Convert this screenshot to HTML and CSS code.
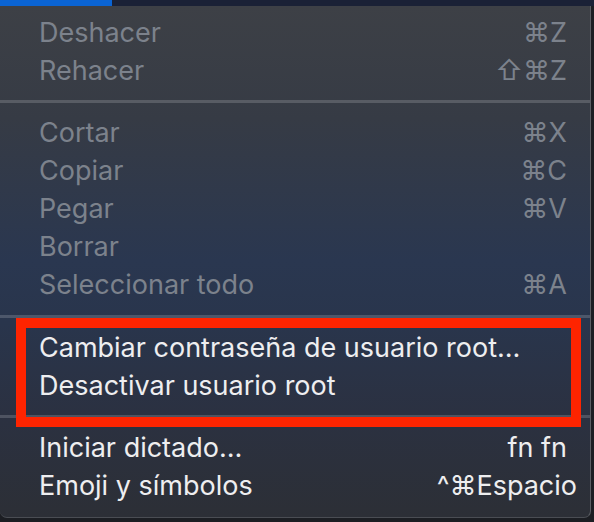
FILE: index.html
```html
<!DOCTYPE html>
<html>
  <head>
    <title>Edición</title>
    <link rel="stylesheet" href="styles.css">
  </head>

  <body>
    <!-- Menu bar strip -->
    <div class="menubar">
      <div class="menubar-active"></div>
    </div>

    <div class="screen">
      <div class="menu">
        <div class="item disabled"><span>Deshacer</span><span class="shortcut">⌘Z</span></div>
        <div class="item disabled"><span>Rehacer</span><span class="shortcut">⇧⌘Z</span></div>
        <div class="separator"></div>

        <div class="item disabled"><span>Cortar</span><span class="shortcut">⌘X</span></div>
        <div class="item disabled"><span>Copiar</span><span class="shortcut">⌘C</span></div>
        <div class="item disabled"><span>Pegar</span><span class="shortcut">⌘V</span></div>
        <div class="item disabled"><span>Borrar</span></div>
        <div class="item disabled"><span>Seleccionar todo</span><span class="shortcut">⌘A</span></div>
        <div class="separator"></div>

        <div class="item"><span>Cambiar contraseña de usuario root…</span></div>
        <div class="item"><span>Desactivar usuario root</span></div>
        <div class="separator"></div>

        <div class="item"><span>Iniciar dictado…</span><span class="shortcut">fn fn</span></div>
        <div class="item"><span>Emoji y símbolos</span><span class="shortcut wide">^⌘Espacio</span></div>

        <!-- highlight annotation -->
        <div class="highlight"></div>
      </div>
    </div>
  </body>
</html>
```

FILE: styles.css
```css
* {
  margin: 0;
  padding: 0;
  box-sizing: border-box;
}

body {
  background: #1c1e23;
  font-family: Inter, "Liberation Sans", "DejaVu Sans", sans-serif;
  width: 594px;
  height: 522px;
  overflow: hidden;
}

.menubar {
  height: 6px;
  background: #1a2136;
}

.menubar-active {
  width: 112px;
  height: 6px;
  background: #0a64d4;
}

.screen {
  display: flex;
}

.menu {
  position: relative;
  width: 591px;
  height: 512px;
  padding-top: 7px;
  background: linear-gradient(180deg, #3d4046 0%, #363b45 22%, #2a3750 50%, #29354c 62%, #2b3141 80%, #2c2f36 100%);
  border-right: 1px solid #5b5e64;
  border-bottom: 1px solid #4a4d53;
  border-radius: 0 0 7px 7px;
}

.item {
  display: flex;
  justify-content: space-between;
  align-items: center;
  height: 38px;
  padding: 0 23px 0 39px;
  font-size: 27px;
  color: #eeeef0;
}

.item.disabled {
  color: #7c828c;
}

.shortcut.wide {
  margin-right: -10px;
}

.separator {
  height: 3px;
  margin: 11px 0 10.5px;
  background: rgba(255, 255, 255, 0.17);
}

.highlight {
  position: absolute;
  left: 16px;
  top: 312px;
  width: 565px;
  height: 109px;
  border: 10px solid #fe2400;
}
```
